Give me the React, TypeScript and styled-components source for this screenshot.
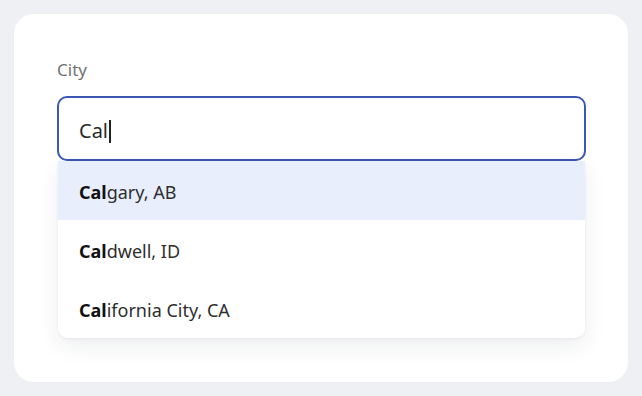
import React from "react";
import styled, { createGlobalStyle } from "styled-components";

const Global = createGlobalStyle`
  html, body { margin: 0; padding: 0; background: #eef0f4; }
  body { font-family: "Noto Sans", "Open Sans", sans-serif; }
`;

const Page = styled.div`
  width: 642px;
  height: 396px;
  box-sizing: border-box;
  padding: 14px 14px 14px 14px;
  background: #eef0f4;
`;

const Card = styled.div`
  box-sizing: border-box;
  height: 368px;
  background: #ffffff;
  border-radius: 20px;
  padding: 44px 42px 0 43px;
  display: flex;
  flex-direction: column;
`;

const Label = styled.label`
  font-size: 17px;
  color: #727272;
  line-height: 24px;
  margin-bottom: 14px;
`;

const Field = styled.div`
  position: relative;
  display: flex;
  flex-direction: column;
`;

const InputBox = styled.div`
  box-sizing: border-box;
  height: 65px;
  border: 2px solid #3d58b2;
  border-radius: 10px;
  display: flex;
  align-items: center;
  padding: 3px 20px 0;
  font-size: 20px;
  color: #2a2a2a;
`;

const Caret = styled.span`
  display: inline-block;
  width: 1.5px;
  height: 23px;
  background: #222;
  margin-left: 1px;
  transform: translateY(1px);
`;

const List = styled.ul`
  list-style: none;
  margin: 0 0 0 1px;
  padding: 0;
  background: #fff;
  border-radius: 0 0 10px 10px;
  box-shadow: 0 8px 22px rgba(30, 40, 70, 0.08), 0 1px 3px rgba(30, 40, 70, 0.06);
  overflow: hidden;
  width: 527px;
`;

const Item = styled.li<{ $active?: boolean }>`
  box-sizing: border-box;
  height: 59px;
  display: flex;
  align-items: center;
  padding: 3px 21px 0;
  font-size: 18px;
  color: #2e2e2e;
  background: ${(p) => (p.$active ? "#e8eefc" : "#fff")};
  b { font-weight: 700; color: #111; }
`;

const cities = ["gary, AB", "dwell, ID", "ifornia City, CA"];

export default function App() {
  return (
    <>
      <Global />
      <Page>
        <Card>
          <Label>City</Label>
          <Field>
            <InputBox>
              Cal<Caret />
            </InputBox>
            <List>
              {cities.map((c, i) => (
                <Item key={c} $active={i === 0}>
                  <b>Cal</b>
                  {c}
                </Item>
              ))}
            </List>
          </Field>
        </Card>
      </Page>
    </>
  );
}
